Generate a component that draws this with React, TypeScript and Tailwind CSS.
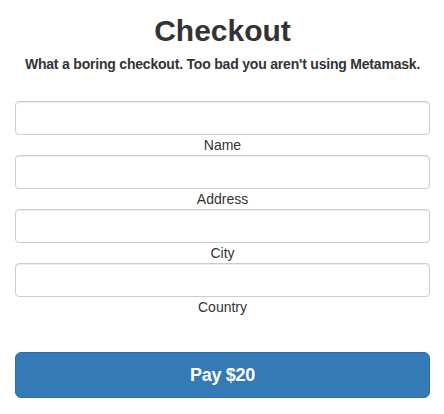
import React from 'react';

const fields = ['Name', 'Address', 'City', 'Country'];

const Field = ({ label }: { label: string }) => (
  <div className="flex flex-col">
    <input
      type="text"
      className="h-[34px] w-full rounded-[4px] border border-[#ccc] bg-white px-3 text-[14px] shadow-[inset_0_1px_1px_rgba(0,0,0,0.075)] outline-none"
    />
    <label className="text-center text-[14px] leading-[20px] text-[#333]">{label}</label>
  </div>
);

const App = () => {
  return (
    <div className="min-h-[414px] bg-white pl-[15px] pr-[14px] pt-[14px] font-['Liberation_Sans',Arial,sans-serif] text-[#333]">
      <h2 className="text-center text-[30px] font-bold leading-[33px]">Checkout</h2>
      <h5 className="mt-[7px] text-center text-[14px] font-bold leading-[20px] tracking-[-0.2px]">
        What a boring checkout. Too bad you aren't using Metamask.
      </h5>
      <form className="mt-[27px] flex flex-col">
        {fields.map(f => <Field key={f} label={f} />)}
        <button
          type="button"
          className="mt-[35px] h-[46px] w-full rounded-[6px] border border-[#2e6da4] bg-[#337ab7] text-[18px] font-bold tracking-[-0.3px] text-white"
        >
          Pay $20
        </button>
      </form>
    </div>
  );
};

export default App;
